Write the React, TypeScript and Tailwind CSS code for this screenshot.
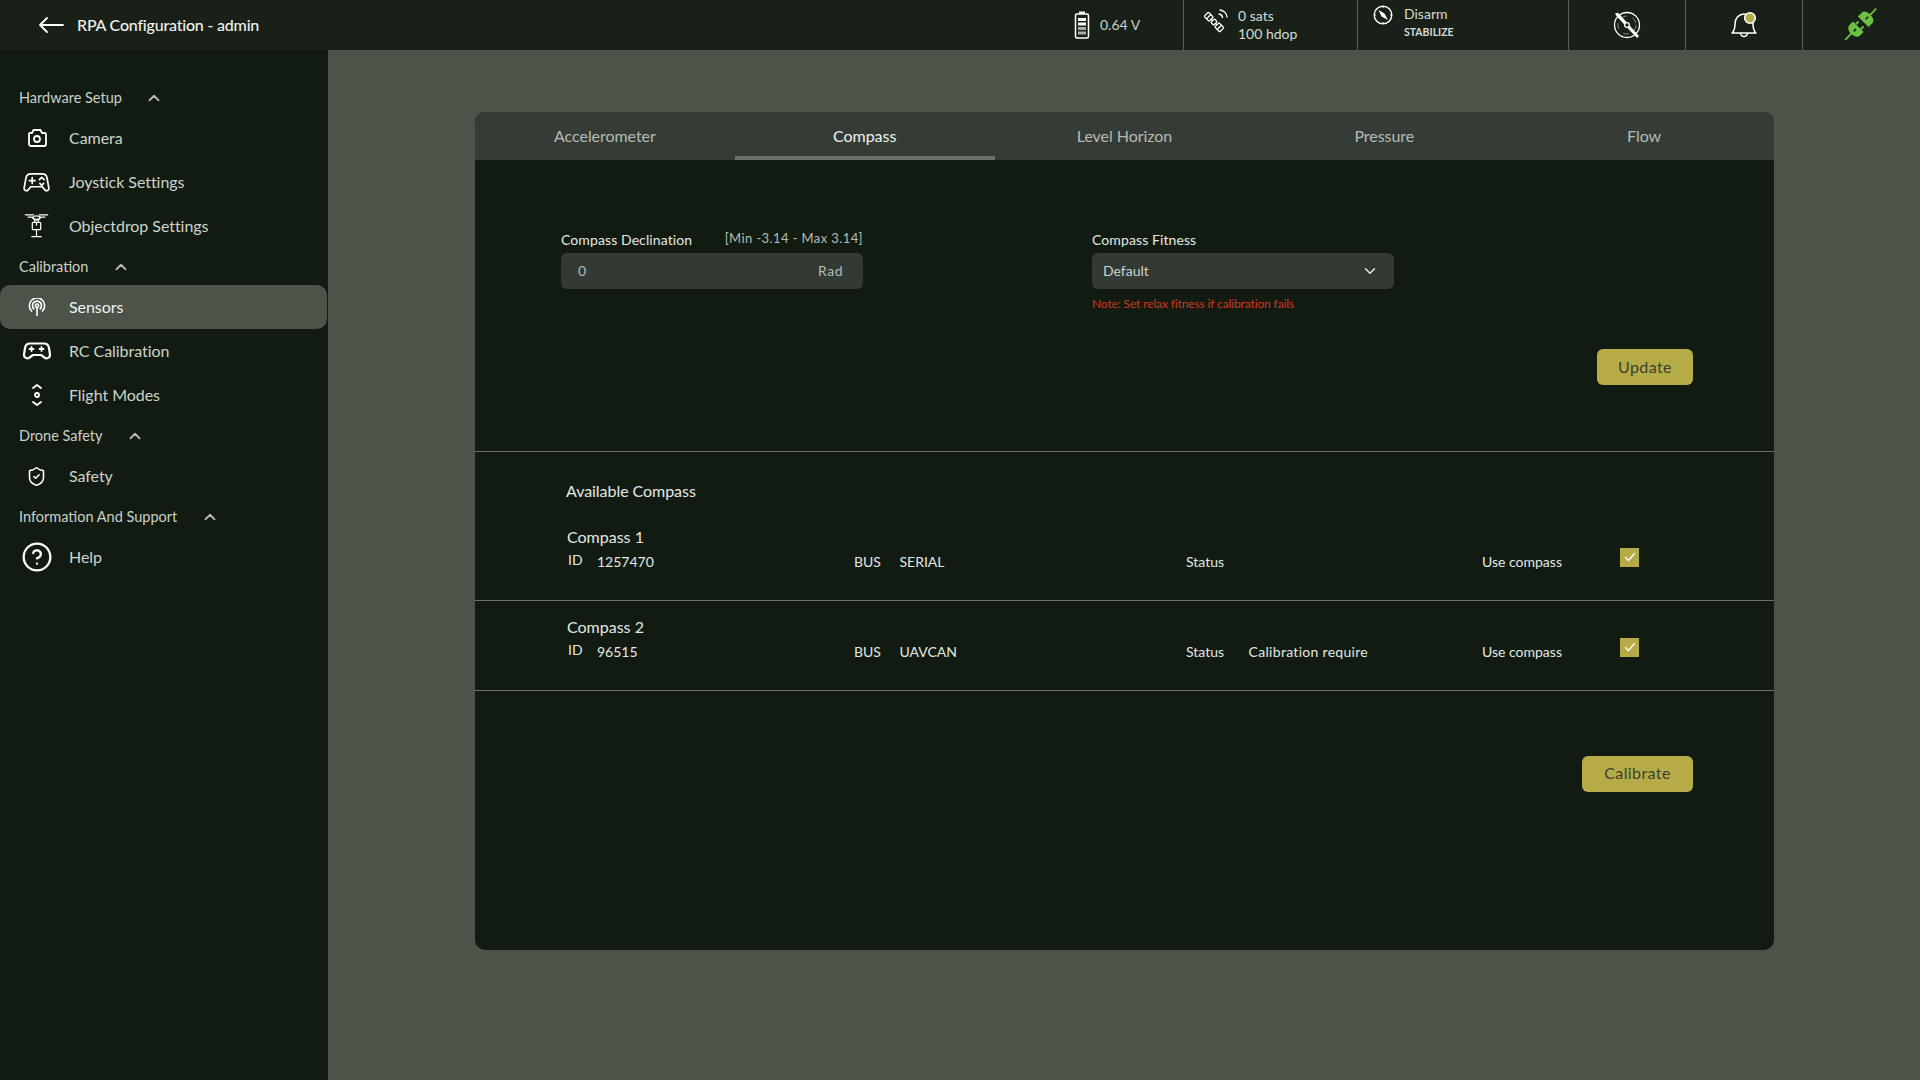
import React from "react";
import { ChevronUp, ChevronDown, ShieldCheck, CircleHelp } from "lucide-react";

const S = { fill: "none", stroke: "white", strokeWidth: 1.8, strokeLinecap: "round", strokeLinejoin: "round" } as const;

const CameraIcon = () => (
  <svg width="20" height="18" viewBox="0 0 20 18" {...S}>
    <path d="M2.500 4h2.500l1.500-3h7l1.500 3h2.500a1.500 1.500 0 0 1 1.500 1.500v9.500a2 2 0 0 1-2 2h-13a2 2 0 0 1-2-2V5.500A1.500 1.500 0 0 1 2.500 4z" />
    <circle cx="10" cy="10" r="3" />
  </svg>
);
const JoystickIcon = () => (
  <svg width="27" height="20" viewBox="0 0 28 21" {...S}>
    <path d="M8 2h12c3 0 4.500 1.500 5 4l2 11c.3 2-2.500 3.500-4 2l-3-3.500H8L5 19c-1.500 1.500-4.300 0-4-2L3 6c.5-2.500 2-4 5-4z" />
    <path d="M6.500 9h6M9.500 6v6" />
    <path d="M17 8l2.500-2.500L22 8M17.500 12l2 2 2-2" />
  </svg>
);
const DroneIcon = () => (
  <svg width="25" height="26" viewBox="0 0 26 28" fill="none" stroke="white" strokeWidth="1.300" strokeLinecap="round">
    <path d="M1 2h9M16 2h9M4 4.500h5M17 4.500h5M8 4.500l3 3h4l3-3" />
    <ellipse cx="13" cy="5" rx="3.500" ry="1.800" />
    <rect x="8.500" y="10" width="9" height="8" rx="1" />
    <path d="M11 10V8M15 10V8M13 10v3M13 18v7M8 25.500h10" />
  </svg>
);
const SensorIcon = () => (
  <svg width="18" height="18" viewBox="0 0 20 20" {...S}>
    <circle cx="10" cy="8.500" r="1.800" />
    <path d="M10 10.500V19.500" />
    <path d="M6.500 12a5 5 0 1 1 7 0" />
    <path d="M4 14.500a8.500 8.500 0 1 1 12 0" />
  </svg>
);
const GamepadIcon = () => (
  <svg width="28" height="18" viewBox="0 0 28 18" fill="none" stroke="white" strokeWidth="2.200" strokeLinecap="round" strokeLinejoin="round">
    <path d="M7 1.500h14c3 0 4.500 1.500 5 4.500l1 6.500c.4 3-3.500 5-5.500 3L18 13h-8l-3.500 2.500c-2 2-5.900 0-5.500-3l1-6.500C2.500 3 4 1.500 7 1.500z" />
    <path d="M6.500 7h4M8.500 5v4M16.500 7h4M18.500 5v4" strokeWidth="1.800" />
  </svg>
);
const FlightIcon = () => (
  <svg width="12" height="22" viewBox="0 0 12 22" {...S}>
    <path d="M2 4l4-3 4 3M2 18l4 3 4-3" />
    <circle cx="6" cy="11" r="2" />
  </svg>
);

const BatteryIcon = () => (
  <svg width="16" height="28" viewBox="0 0 16 28" fill="none">
    <rect x="5" y="0.500" width="6" height="2.500" fill="white" />
    <rect x="1.500" y="3" width="13" height="24" rx="1.500" stroke="white" strokeWidth="1.500" />
    <rect x="4" y="7" width="8" height="3" fill="white" />
    <rect x="4" y="11.500" width="8" height="3" fill="white" />
    <rect x="4" y="16" width="8" height="3" fill="#aab0a8" />
    <rect x="4" y="20.500" width="8" height="3" fill="#aab0a8" />
  </svg>
);
const SatelliteIcon = () => (
  <svg width="24" height="24" viewBox="0 0 24 24" fill="none" stroke="white" strokeWidth="1.300" strokeLinecap="round">
    <g transform="rotate(45 10 13)">
      <rect x="-1" y="10" width="7" height="6" rx="1" />
      <rect x="8" y="10.500" width="4" height="5" rx="1" />
      <rect x="14" y="10" width="7" height="6" rx="1" />
      <path d="M6 13h2M12 13h2M2.500 10v6M17.500 10v6" />
    </g>
    <path d="M15 5a4 4 0 0 1 3.500 3.500M16 1a8 8 0 0 1 7 7" />
  </svg>
);
const CompassIcon = () => (
  <svg width="20" height="20" viewBox="0 0 20 20" fill="none">
    <circle cx="10" cy="10" r="8.800" stroke="white" strokeWidth="1.400" />
    <path d="M5.500 5L11.500 8.500L15 15L8.500 11.500Z" fill="white" />
    <path d="M10 1v2M10 17v2M1 10h2M17 10h2" stroke="white" strokeWidth="1" />
  </svg>
);
const PropIcon = () => (
  <svg width="28" height="28" viewBox="0 0 28 28" fill="none">
    <circle cx="14" cy="14" r="12.500" stroke="white" strokeWidth="1.300" />
    <circle cx="14" cy="14" r="9" stroke="#9aa098" strokeWidth="0.800" strokeDasharray="6 6" />
    <path d="M2 2.500L5 1.800L14 11.500L26 25L24 27L14 16.500L3.500 5Z" fill="white" />
    <circle cx="14" cy="14" r="2.300" fill="#182018" stroke="white" strokeWidth="1.300" />
  </svg>
);
const BellIcon = () => (
  <svg width="28" height="28" viewBox="0 0 28 28" fill="none">
    <path d="M2 22c2-2 3-4 3-9 0-6 4-10 9-10s9 4 9 10c0 5 1 7 3 9z" stroke="white" strokeWidth="1.500" strokeLinejoin="round" />
    <path d="M10.500 22a3.500 3.500 0 0 0 7 0" stroke="white" strokeWidth="1.500" />
    <circle cx="20" cy="7" r="5.300" fill="#b5ac47" stroke="white" strokeWidth="1.600" />
  </svg>
);
const PlugIcon = () => (
  <svg width="34" height="34" viewBox="0 0 34 34" fill="none">
    <g transform="rotate(45 17 17)">
      <path d="M17 -6V3" stroke="#6dc042" strokeWidth="1.800" />
      <path d="M9.500 12.500V7c0-3 3-4.500 7.500-4.500s7.500 1.500 7.500 4.500v5.500z" fill="#6dc042" />
      <path d="M17 5.500v3.500" stroke="#182018" strokeWidth="1.500" />
      <path d="M13.500 19.500v-4M20.500 19.500v-4" stroke="#6dc042" strokeWidth="2" />
      <path d="M9.500 19.500h15v4.500c0 3.500-3 5.500-7.500 5.500s-7.500-2-7.500-5.500z" fill="#6dc042" />
      <path d="M17 22.500v3.500" stroke="#182018" strokeWidth="1.500" />
      <path d="M17 29v9" stroke="#6dc042" strokeWidth="1.800" />
    </g>
  </svg>
);

function SectionHeader({ label }: { label: string }) {
  return (
    <div className="h-[37px] pl-[19px] pt-[1px] flex items-center gap-[23.5px] text-[14.5px] text-[#c9d1c9]">
      <span>{label}</span>
      <ChevronUp size={18} strokeWidth={2.4} className="text-[#b4b9b3]" />
    </div>
  );
}

function NavItem({ icon, label, active }: { icon: React.ReactNode; label: string; active?: boolean }) {
  return (
    <div className={`h-[44px] w-[327px] flex items-center rounded-[10px] text-[16px] tracking-[-0.05px] ${active ? "bg-[#4c544a] text-[#f0f3f0]" : "text-[#ccd4cc]"}`}>
      <span className="w-[73px] shrink-0 flex justify-center">{icon}</span>
      <span className="-ml-[4px]">{label}</span>
    </div>
  );
}

function Tab({ label, active }: { label: string; active?: boolean }) {
  return (
    <div className={`flex-1 h-[48px] flex items-center justify-center text-[16px] tracking-[-0.05px] border-b-4 pt-[4px] ${active ? "border-[#6c736b] text-[#eef1ee]" : "border-transparent text-[#b6bbb5]"}`}>
      {label}
    </div>
  );
}

function Check() {
  return (
    <div className="w-[19px] h-[19px] mb-[10px] bg-[#b5ac47] flex items-center justify-center">
      <svg width="12" height="12" viewBox="0 0 12 12" fill="none" stroke="white" strokeWidth="1.300" strokeLinecap="round">
        <path d="M1.500 6.500L4.500 9.500L10.500 2.500" />
      </svg>
    </div>
  );
}

function CompassRow({ name, id, bus, status }: { name: string; id: string; bus: string; status?: string }) {
  return (
    <div className="h-[90px] border-b border-[#6c736b] pl-[92px] pt-[14px]">
      <div className="h-[24px] leading-[24px] text-[16px] text-[#e4e8e4]">{name}</div>
      <div className="mt-[3px] h-[20px] grid grid-rows-[20px] grid-cols-[287px_332px_296px_138px_auto] text-[14px] text-[#e4e8e4] leading-[20px]">
        <div className="flex items-center h-[20px]">
          <span className="w-[30px] pl-[1px] mb-[4px]">ID</span>
          <span>{id}</span>
        </div>
        <div className="flex items-center h-[20px] gap-[18.5px]">
          <span>BUS</span>
          <span>{bus}</span>
        </div>
        <div className="flex items-center h-[20px] gap-[24.5px]">
          <span>Status</span>
          {status && <span className="tracking-[0.3px]">{status}</span>}
        </div>
        <div className="flex items-center h-[20px]">Use compass</div>
        <div className="flex items-center h-[20px]">
          <Check />
        </div>
      </div>
    </div>
  );
}

export default function App() {
  return (
    <div className="w-full h-screen overflow-hidden flex flex-col bg-[#4c544a] font-['Lato','Noto_Sans',sans-serif] text-white">
      {/* Top bar */}
      <header className="h-[50px] shrink-0 bg-[#182018] flex items-stretch">
        <div className="flex-1 flex items-center pl-[38px]">
          <svg width="26" height="18" viewBox="0 0 26 18" fill="none" stroke="white" strokeWidth="1.800" strokeLinecap="round" strokeLinejoin="round">
            <path d="M25 9H2M9 2L2 9l7 7" />
          </svg>
          <span className="ml-[13px] text-[16px] font-medium tracking-[-0.2px] text-[#eef1ee]">RPA Configuration - admin</span>
        </div>
        <div className="w-[118px] flex items-center gap-[10px] pl-[9px] pb-[1px] text-[14px] text-[#c9d1c9]">
          <BatteryIcon />
          <span>0.64 V</span>
        </div>
        <div className="w-[174px] border-l border-[#5a6058] flex items-center pl-[20px] gap-[10px] text-[14px] leading-[18px] text-[#d5dbd5]">
          <span className="mb-[8px]"><SatelliteIcon /></span>
          <div>
            <div>0 sats</div>
            <div>100 hdop</div>
          </div>
        </div>
        <div className="w-[211px] border-l border-[#5a6058] flex pl-[15px] pt-[4px] gap-[11px]">
          <span className="mt-[1px]"><CompassIcon /></span>
          <div>
            <div className="text-[14px] leading-[20px] text-[#d5dbd5]">Disarm</div>
            <div className="text-[10.5px] leading-[14px] mt-[1px] font-bold text-[#d5dbd5]">STABILIZE</div>
          </div>
        </div>
        <div className="w-[117px] border-l border-[#5a6058] flex items-center justify-center pr-[1px]"><PropIcon /></div>
        <div className="w-[117px] border-l border-[#5a6058] flex items-center justify-center pr-[1px]"><BellIcon /></div>
        <div className="w-[118px] border-l border-[#5a6058] flex items-center justify-center pr-[3px]"><PlugIcon /></div>
      </header>

      <div className="flex-1 flex min-h-0">
        {/* Sidebar */}
        <aside className="w-[328px] shrink-0 bg-[#121b11] pt-[29px]">
          <SectionHeader label="Hardware Setup" />
          <NavItem icon={<CameraIcon />} label="Camera" />
          <NavItem icon={<JoystickIcon />} label="Joystick Settings" />
          <NavItem icon={<DroneIcon />} label="Objectdrop Settings" />
          <SectionHeader label="Calibration" />
          <NavItem icon={<SensorIcon />} label="Sensors" active />
          <NavItem icon={<GamepadIcon />} label="RC Calibration" />
          <NavItem icon={<FlightIcon />} label="Flight Modes" />
          <SectionHeader label="Drone Safety" />
          <NavItem icon={<ShieldCheck size={21} strokeWidth={1.8} color="white" />} label="Safety" />
          <SectionHeader label="Information And Support" />
          <NavItem icon={<CircleHelp size={32} strokeWidth={1.7} color="white" />} label="Help" />
        </aside>

        {/* Main */}
        <main className="flex-1 pt-[62px] pl-[147px] pr-[146px]">
          <div className="h-[838px] bg-[#121b11] rounded-[10px] overflow-hidden">
            <div className="flex bg-[#353c35]">
              <Tab label="Accelerometer" />
              <Tab label="Compass" active />
              <Tab label="Level Horizon" />
              <Tab label="Pressure" />
              <Tab label="Flow" />
            </div>

            <section className="border-b border-[#6c736b] pt-[70px] pb-[66px] pl-[86px] pr-[81px] flex flex-col">
              <div className="flex gap-[229px]">
                <div className="w-[302px]">
                  <div className="h-[23px] flex justify-between pb-[3px] text-[14px] leading-[19px] tracking-[0.1px] text-[#e4e8e4]">
                    <span>Compass Declination</span>
                    <span className="text-[13px] leading-[16px] tracking-[0.4px] text-[#b6bbb5]">[Min -3.14 - Max 3.14]</span>
                  </div>
                  <div className="h-[36px] rounded-[6px] bg-[#323a33] flex items-center justify-between pl-[17px] pr-[20px] pb-[1px] text-[14px] text-[#b6bbb5] tracking-[0.5px]">
                    <span>0</span>
                    <span>Rad</span>
                  </div>
                </div>
                <div className="w-[302px]">
                  <div className="h-[23px] text-[14px] leading-[20px] tracking-[0.1px] text-[#e4e8e4]">Compass Fitness</div>
                  <div className="h-[36px] rounded-[6px] bg-[#323a33] flex items-center justify-between pl-[11px] pr-[15px] pb-[1px] text-[14px] text-[#cdd2cc]">
                    <span>Default</span>
                    <ChevronDown size={18} strokeWidth={2} className="text-[#e4e8e4]" />
                  </div>
                  <div className="mt-[7px] h-[16px] text-[12px] leading-[16px] tracking-[-0.13px] text-[#d6351a]">Note: Set relax fitness if calibration fails</div>
                </div>
              </div>
              <button className="self-end mt-[37px] h-[36px] w-[96px] pb-[1px] rounded-[6px] bg-[#b5ac47] text-[16px] text-[#3b3f34] tracking-[0.4px]">Update</button>
            </section>

            <section>
              <div className="pl-[91px] pt-[29px] pb-[10px] text-[16px] leading-[20px] tracking-[-0.05px] text-[#e4e8e4]">Available Compass</div>
              <CompassRow name="Compass 1" id="1257470" bus="SERIAL" />
              <CompassRow name="Compass 2" id="96515" bus="UAVCAN" status="Calibration require" />
            </section>

            <div className="pt-[65px] pr-[81px] flex justify-end">
              <button className="h-[36px] w-[111px] pb-[2px] rounded-[6px] bg-[#b5ac47] text-[16px] text-[#3b3f34] tracking-[0.4px]">Calibrate</button>
            </div>
          </div>
        </main>
      </div>
    </div>
  );
}
